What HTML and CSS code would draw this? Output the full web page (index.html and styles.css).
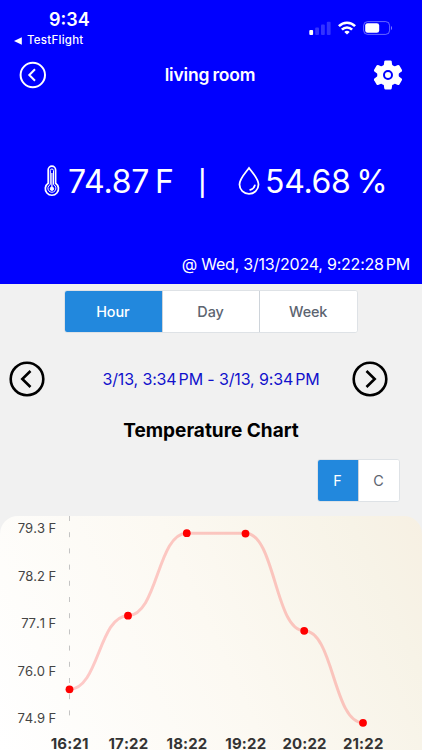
FILE: index.html
```html
<!DOCTYPE html>
<html lang="en">
<head>
    <meta charset="UTF-8">
    <meta name="viewport" content="width=device-width, initial-scale=1">
    <title>living room</title>
    <link rel="stylesheet" href="styles.css">
</head>
<body>
    <div class="hero">
        <div class="status-bar">
            <div class="status-left">
                <div class="clock">9:34</div>
                <div class="back-app">
                    <svg width="8" height="8" viewBox="0 0 8 8"><path d="M0 4 L7.8 0.3 V7.7 Z" fill="#fff"/></svg>
                    <span>TestFlight</span>
                </div>
            </div>
            <div class="status-icons">
                <svg width="22" height="14" viewBox="0 0 22 14" fill="#fff">
                    <rect x="0.3" y="9" width="3.8" height="5" rx="1"/>
                    <g opacity="0.2">
                        <rect x="6.2" y="6.6" width="3.8" height="7.4" rx="1"/>
                        <rect x="12" y="3.6" width="3.8" height="10.4" rx="1"/>
                        <rect x="17.8" y="0.8" width="3.8" height="13.2" rx="1"/>
                    </g>
                </svg>
                <svg width="18" height="14" viewBox="0 0 18 14" fill="none" stroke="#fff" stroke-width="2.6">
                    <path d="M0.9 5.2 C5.4 0.6 12.6 0.6 17.1 5.2"/>
                    <path d="M3.9 8.6 C6.8 5.7 11.2 5.7 14.1 8.6"/>
                    <path d="M9 13.6 L6.3 10.9 C7.8 9.5 10.2 9.5 11.7 10.9 Z" fill="#fff" stroke="none"/>
                </svg>
                <svg width="30" height="14" viewBox="0 0 30 14">
                    <rect x="0.6" y="0.6" width="26" height="12.8" rx="4" fill="none" stroke="#fff" stroke-opacity="0.4"/>
                    <rect x="2.2" y="2.2" width="14" height="9.6" rx="2.4" fill="#fff"/>
                    <path d="M28 5 C29.4 5.6 29.4 8.4 28 9 Z" fill="#fff" fill-opacity="0.5"/>
                </svg>
            </div>
        </div>
        <div class="nav">
            <svg width="28" height="28" viewBox="0 0 28 28" fill="none" stroke="#fff" stroke-width="2">
                <circle cx="13.8" cy="14" r="12.2"/>
                <path d="M16 8.3 L10.3 14 L16 19.7"/>
            </svg>
            <h1>living room</h1>
            <svg width="30" height="30" viewBox="0 0 30 30">
                <g fill="#fff">
                    <circle cx="15" cy="15" r="10.8"/>
                    <path id="tooth" d="M10.6 6.5 L11.3 1.4 Q11.5 0.4 12.5 0.4 H17.5 Q18.5 0.4 18.7 1.4 L19.4 6.5 Z"/>
                    <use href="#tooth" transform="rotate(60 15 15)"/>
                    <use href="#tooth" transform="rotate(120 15 15)"/>
                    <use href="#tooth" transform="rotate(180 15 15)"/>
                    <use href="#tooth" transform="rotate(240 15 15)"/>
                    <use href="#tooth" transform="rotate(300 15 15)"/>
                </g>
                <circle cx="15" cy="15" r="4" fill="#fff" stroke="#00f" stroke-width="2"/>
            </svg>
        </div>
        <div class="readings">
            <svg class="thermo" width="16" height="32" viewBox="0 0 16 32" fill="none" stroke="#fff">
                <path d="M4.2 18.2 V4.9 A3.7 3.7 0 0 1 11.6 4.9 V18.2 A6.6 6.6 0 1 1 4.2 18.2 Z" stroke-width="1.7"/>
                <path d="M6.3 19.6 V5.6 A1.6 1.6 0 0 1 9.5 5.6 V19.6 A4 4 0 1 1 6.3 19.6 Z" stroke-width="1"/>
                <path d="M7.9 8 V23" stroke-width="1.2"/>
                <circle cx="7.9" cy="23.8" r="1.7" fill="#fff"/>
            </svg>
            <span class="temperature">74.87 F</span>
            <span class="divider">|</span>
            <svg class="drop" width="22" height="30" viewBox="0 0 22 30" fill="none" stroke="#fff" stroke-width="1.8">
                <path d="M11 2 C7.6 6.6 1.5 12.6 1.5 18.6 A9.5 9.3 0 0 0 20.5 18.6 C20.5 12.6 14.4 6.6 11 2 Z"/>
                <path d="M16.8 19.4 A6 6 0 0 1 12.2 23.8" stroke-linecap="round"/>
            </svg>
            <span class="humidity">54.68 %</span>
        </div>
        <div class="updated">@ Wed, 3/13/2024, 9:22:28<span class="thin"></span>PM</div>
    </div>

    <div class="segments periods">
        <button class="active">Hour</button>
        <button>Day</button>
        <button>Week</button>
    </div>

    <div class="range">
        <svg width="36" height="36" viewBox="0 0 36 36" fill="none" stroke="#000" stroke-width="2.6">
            <circle cx="18" cy="18" r="16.3"/>
            <path d="M21.5 10 L13.3 18 L21.5 26"/>
        </svg>
        <span class="range-text">3/13, 3:34<i class="thin"></i>PM - 3/13, 9:34<i class="thin"></i>PM</span>
        <svg width="36" height="36" viewBox="0 0 36 36" fill="none" stroke="#000" stroke-width="2.6">
            <circle cx="18" cy="18" r="16.3"/>
            <path d="M14.5 10 L22.7 18 L14.5 26"/>
        </svg>
    </div>

    <h2>Temperature Chart</h2>

    <div class="segments units">
        <button class="active">F</button>
        <button>C</button>
    </div>

    <div class="chart">
        <svg width="422" height="234" viewBox="0 0 422 234">
            <path class="axis" d="M69.5 0 V203"/>
            <g class="y-labels">
                <text x="56.3" y="17">79.3 F</text>
                <text x="56.3" y="64.5">78.2 F</text>
                <text x="56.3" y="112">77.1 F</text>
                <text x="56.3" y="159.5">76.0 F</text>
                <text x="56.3" y="207">74.9 F</text>
            </g>
            <path class="line" d="M69.5 173.3 C98.8 173.3 98.8 99.7 128 99.7 C157.5 99.7 157.5 17.2 186.8 17.2 H245.5 C275 17.2 275 114.8 304.2 114.8 C333.5 114.8 333.5 206.8 363 206.8"/>
            <g class="dots">
                <circle cx="69.5" cy="173.3" r="3.9"/>
                <circle cx="128" cy="99.7" r="3.9"/>
                <circle cx="186.8" cy="17.2" r="3.9"/>
                <circle cx="245.5" cy="17.6" r="3.9"/>
                <circle cx="304.2" cy="114.8" r="3.9"/>
                <circle cx="363" cy="206.8" r="3.9"/>
            </g>
            <g class="x-labels">
                <text x="69.7" y="232.6">16:21</text>
                <text x="128.4" y="232.6">17:22</text>
                <text x="187" y="232.6">18:22</text>
                <text x="245.8" y="232.6">19:22</text>
                <text x="304.5" y="232.6">20:22</text>
                <text x="363.2" y="232.6">21:22</text>
            </g>
        </svg>
    </div>
</body>
</html>
```
FILE: styles.css
```css
* {
    box-sizing: border-box;
}
body {
    margin: 0;
    width: 422px;
    height: 750px;
    overflow: hidden;
    background: #f1f1f1;
    font-family: Inter, "Liberation Sans", sans-serif;
}
svg {
    display: block;
    flex: none;
}
.hero {
    height: 284px;
    background: #00f;
    color: #fff;
    display: flex;
    flex-direction: column;
}
.status-bar {
    height: 50px;
    display: flex;
    justify-content: space-between;
    padding: 9px 29px 0 14px;
}
.clock {
    padding-left: 35px;
    font-size: 18px;
    line-height: 22px;
    font-weight: 600;
}
.back-app {
    display: flex;
    align-items: center;
    gap: 5px;
    margin-top: 2px;
    font-size: 11.5px;
    line-height: 15px;
    font-weight: 500;
    letter-spacing: 0.25px;
}
.status-icons {
    display: flex;
    gap: 7px;
    padding-top: 12px;
}
.nav {
    height: 50px;
    display: flex;
    align-items: center;
    justify-content: space-between;
    padding: 0 19px;
}
.nav h1 {
    margin: 0 0 2px;
    font-size: 17.5px;
    font-weight: 600;
    letter-spacing: -0.1px;
    word-spacing: -1px;
    letter-spacing: -0.2px;
}
.readings {
    height: 162px;
    display: flex;
    align-items: center;
    padding-left: 44px;
    font-size: 32px;
    letter-spacing: -0.1px;
    word-spacing: -3px;
    white-space: nowrap;
}
.temperature {
    width: 138px;
    padding-left: 8px;
    letter-spacing: -0.2px;
}
.divider {
    width: 40px;
    padding-top: 3px;
    font-size: 25px;
    font-weight: 500;
}
.humidity {
    padding-left: 5px;
    letter-spacing: -0.3px;
}
.updated {
    padding-right: 12px;
    text-align: right;
    font-size: 16px;
    letter-spacing: -0.22px;
    line-height: 4px;
}
.thin {
    display: inline-block;
    width: 2px;
}
.segments {
    display: flex;
    height: 43px;
    border: 1px solid #dee2e6;
    border-radius: 3px;
    background: #fff;
    overflow: hidden;
}
.segments button {
    flex: 1;
    border: none;
    border-left: 1px solid #ced4da;
    padding: 0 1px 1px 0;
    background: #fff;
    color: #5c6470;
    font-family: inherit;
    font-size: 14.4px;
    font-weight: 500;
    letter-spacing: -0.1px;
}
.segments .active {
    border-left: none;
    background: #2288dd;
    color: #fff;
}
.periods {
    width: 294px;
    margin: 6px 0 0 64px;
}
.range {
    height: 36px;
    margin-top: 28px;
    padding: 0 34px 0 9px;
    display: flex;
    align-items: center;
    color: #1111cc;
    font-size: 16px;
}
.range-text {
    width: 307px;
    padding-left: 25px;
    text-align: center;
    letter-spacing: -0.13px;
}
h2 {
    margin: 22px 0 0;
    text-align: center;
    font-size: 19px;
    line-height: 24px;
    font-weight: 700;
}
.units {
    width: 83px;
    margin: 16px 0 0 317px;
}
.units button {
    font-weight: 400;
}
.chart {
    margin-top: 14px;
    height: 234px;
    border-radius: 18px 18px 0 0;
    background: linear-gradient(65deg, #fff 0%, #fcf9f2 50%, #f7f3e7 86%, #f7f0e3 100%);
    overflow: hidden;
}
.axis {
    stroke: #c4c4c4;
    stroke-width: 1;
    stroke-dasharray: 5 11.2;
    fill: none;
}
.line {
    fill: none;
    stroke: #f00;
    stroke-opacity: 0.2;
    stroke-width: 3;
}
.dots {
    fill: #f00;
}
.y-labels {
    fill: #444;
    font-size: 13px;
    font-kerning: none;
    text-anchor: end;
}
.x-labels {
    fill: #333;
    font-size: 15px;
    font-weight: 700;
    font-kerning: none;
    letter-spacing: 0.15px;
    text-anchor: middle;
}
```
